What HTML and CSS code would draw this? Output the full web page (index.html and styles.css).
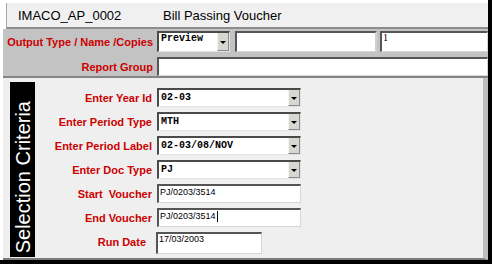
FILE: index.html
```html
<!DOCTYPE html>
<html lang="en">
<head>
    <meta charset="UTF-8">
    <title>Bill Passing Voucher</title>
    <link rel="stylesheet" href="styles.css">
</head>
<body>
<div class="frame">
    <div class="header">
        <span class="code">IMACO_AP_0002</span>
        <span class="title">Bill Passing Voucher</span>
    </div>

    <div class="params">
        <div class="prow first">
            <span class="plabel">Output Type / Name /Copies</span>
            <div class="combo preview">
                <span class="val">Preview</span>
                <span class="arrow"></span>
            </div>
            <div class="field name"></div>
            <div class="field copies">1</div>
        </div>
        <div class="prow">
            <span class="plabel">Report Group</span>
            <div class="field group"></div>
        </div>
    </div>

    <div class="criteria">
        <div class="sidebar"><span>Selection Criteria</span></div>
        <div class="fields">
            <span class="label">Enter Year Id</span>
            <div class="combo"><span class="val">02-03</span><span class="arrow"></span></div>

            <span class="label">Enter Period Type</span>
            <div class="combo"><span class="val">MTH</span><span class="arrow"></span></div>

            <span class="label">Enter Period Label</span>
            <div class="combo"><span class="val">02-03/08/NOV</span><span class="arrow"></span></div>

            <span class="label">Enter Doc Type</span>
            <div class="combo"><span class="val">PJ</span><span class="arrow"></span></div>

            <span class="label">Start  Voucher</span>
            <div class="field text">PJ/0203/3514</div>

            <span class="label">End Voucher</span>
            <div class="field text">PJ/0203/3514<span class="caret"></span></div>

            <span class="label run">Run Date</span>
            <div class="field text date">17/03/2003</div>
        </div>
    </div>
</div>
</body>
</html>
```

FILE: styles.css
```css
body {
    margin: 0;
    font-family: "Liberation Sans", Arial, sans-serif;
    background: #fff;
}
.frame {
    width: 492px;
    height: 264px;
    box-sizing: border-box;
    background: #fff;
    border-right: 4px solid #000;
    border-bottom: 4px solid #000;
    padding: 3px 0 0 3px;
    display: flex;
    flex-direction: column;
}
.header {
    height: 24px;
    margin-left: 3px;
    background: #f0f0f0;
    border-left: 1px solid #a8a8a8;
    border-bottom: 2px solid #8c8c8c;
    display: flex;
    align-items: center;
    font-size: 13px;
    color: #000;
}
.code {
    width: 156px;
    box-sizing: border-box;
    padding-left: 11px;
}
.params {
    background: #c3c3c3;
    border-bottom: 2px solid #858585;
}
.prow {
    display: flex;
    align-items: center;
    height: 19px;
    margin-top: 5px;
}
.prow.first {
    height: 21px;
    margin-top: 2px;
}
.plabel, .label {
    font-size: 11px;
    font-weight: bold;
    color: #cc0000;
    text-align: right;
    white-space: pre;
}
.plabel {
    width: 150px;
    margin-right: 4px;
}
.combo {
    display: flex;
    height: 19px;
    box-sizing: border-box;
    background: #fff;
    border-top: 2px solid #4a4a4a;
    border-left: 2px solid #4a4a4a;
    border-right: 1px solid #e2e2e2;
    border-bottom: 1px solid #e2e2e2;
}
.combo .val {
    flex: 1;
    font-family: "Liberation Mono", "Courier New", monospace;
    font-weight: bold;
    font-size: 10px;
    line-height: 15px;
    padding-left: 2px;
    color: #000;
}
.arrow {
    width: 10px;
    background: #d8d6d0;
    border-left: 1px solid #f4f4f4;
    border-right: 1px solid #8a8a8a;
    border-bottom: 1px solid #8a8a8a;
    display: flex;
    align-items: center;
    justify-content: center;
}
.arrow::after {
    content: "";
    border-left: 3px solid transparent;
    border-right: 3px solid transparent;
    border-top: 3px solid #000;
    margin-top: 1px;
}
.combo.preview {
    width: 73px;
    height: 21px;
}
.combo.preview .val {
    line-height: 11px;
}
.field {
    height: 19px;
    box-sizing: border-box;
    background: #fff;
    border-top: 2px solid #555;
    border-left: 2px solid #555;
    border-right: 1px solid #d6d6d6;
    border-bottom: 1px solid #d6d6d6;
    color: #000;
}
.field.name {
    width: 142px;
    height: 21px;
    margin-left: 5px;
    border-right: 2px solid #d0d0d0;
}
.field.copies {
    flex: 1;
    height: 21px;
    margin-left: 3px;
    font-family: "Liberation Serif", serif;
    font-size: 10px;
    line-height: 10px;
    padding-left: 1px;
}
.field.group {
    flex: 1;
}
.criteria {
    flex: 1;
    display: flex;
    background: #efefef;
    border-bottom: 2px solid #7c7c7c;
    border-right: 5px solid #bdbdbd;
}
.sidebar {
    width: 25px;
    margin: 4px 0 1px 7px;
    background: #000;
    display: flex;
    justify-content: center;
    align-items: flex-end;
    padding-bottom: 4px;
    box-sizing: border-box;
}
.sidebar span {
    writing-mode: vertical-rl;
    transform: rotate(180deg);
    color: #fff;
    font-size: 20px;
    line-height: 24px;
    white-space: nowrap;
}
.fields {
    display: grid;
    grid-template-columns: 117px 144px;
    grid-auto-rows: 19px;
    column-gap: 5px;
    row-gap: 5px;
    padding-top: 10px;
    align-content: start;
}
.label {
    align-self: center;
}
.label.run {
    margin-right: 6px;
}
.field.text {
    font-size: 9px;
    line-height: 13px;
    padding-left: 1px;
    display: flex;
    align-items: flex-start;
}
.caret {
    width: 1px;
    height: 11px;
    background: #000;
    margin-left: 1px;
    margin-top: 1px;
}
.field.date {
    width: 106px;
    height: 22px;
    margin-left: -1px;
    line-height: 11px;
}
```
